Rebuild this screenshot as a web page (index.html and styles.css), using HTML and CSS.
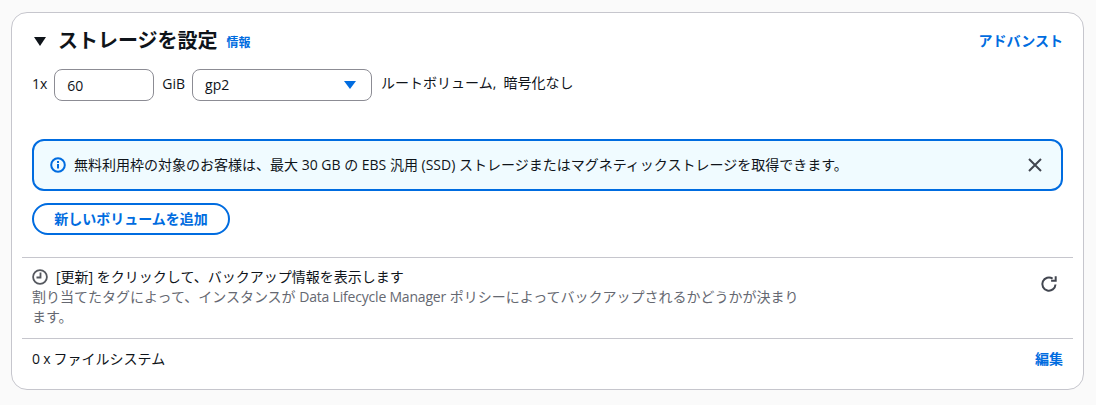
FILE: index.html
```html
<!DOCTYPE html>
<html lang="ja">
<head>
<meta charset="utf-8">
<title>ストレージを設定</title>
<link rel="stylesheet" href="styles.css">
</head>
<body>
<section class="card">
  <header class="head">
    <div class="head-left">
      <svg class="caret" width="12" height="9" viewBox="0 0 12 9"><path d="M0 0h12L6 9z" fill="#0f141a"/></svg>
      <h2 class="title">ストレージを設定</h2>
      <a class="info">情報</a>
    </div>
    <a class="link-bold">アドバンスト</a>
  </header>
  <div class="row">
    <span class="lbl">1x</span>
    <div class="field field-num">60</div>
    <span class="lbl">GiB</span>
    <div class="field field-sel"><span>gp2</span>
      <svg width="12" height="8" viewBox="0 0 12 8"><path d="M0 0h12L6 8z" fill="#006ce0"/></svg>
    </div>
    <span class="lbl hint">ルートボリューム,&nbsp; 暗号化なし</span>
  </div>
  <div class="alert">
    <svg class="alert-icon" width="16" height="16" viewBox="0 0 16 16" fill="none" stroke="#006ce0" stroke-width="2"><circle cx="8" cy="8" r="6.8"/><path d="M8 7v4.5"/><path d="M8 4v2"/></svg>
    <span class="alert-text">無料利用枠の対象のお客様は、最大 30 GB の EBS 汎用 (SSD) ストレージまたはマグネティックストレージを取得できます。</span>
    <svg class="alert-close" width="16" height="16" viewBox="0 0 16 16" fill="none" stroke="#424650" stroke-width="2"><path d="M2 2l12 12M14 2L2 14"/></svg>
  </div>
  <button class="btn">新しいボリュームを追加</button>
  <div class="backup">
    <div class="backup-main">
      <div class="backup-title">
        <svg width="16" height="16" viewBox="0 0 16 16" fill="none" stroke="#55585f" stroke-width="1.8"><circle cx="8" cy="8" r="6.9"/><path d="M8.5 3.5V8.5H4.5"/></svg>
        <span>[更新] をクリックして、バックアップ情報を表示します</span>
      </div>
      <p class="backup-desc">割り当てたタグによって、インスタンスが <span class="tight">Data Lifecycle Manager</span> ポリシーによってバックアップされるかどうかが決まります。</p>
    </div>
    <svg class="refresh" width="18" height="18" viewBox="0 0 18 18" fill="none" stroke="#424650" stroke-width="2"><path d="M15.5 9.5A6.6 6.6 0 1 1 12.6 3.6"/><path d="M15.7 1.2v4.6h-4.6" /></svg>
  </div>
  <div class="fs">
    <span class="fs-label">0 x ファイルシステム</span>
    <a class="link-bold">編集</a>
  </div>
</section>
</body>
</html>
```
FILE: styles.css
```css
* { box-sizing: border-box; }
html, body { margin: 0; height: 405px; overflow: hidden; }
body {
  background: #fafafa;
  padding: 12px 12px 15px 11px;
  font-family: "Open Sans", "Noto Sans CJK JP", sans-serif;
  font-size: 14px;
  line-height: 20px;
  color: #0f141a;
}
.card {
  height: 378px;
  background: #fff;
  border: 1px solid #c6c6cd;
  border-radius: 16px;
  padding: 0 10px;
}
.head {
  display: flex;
  justify-content: space-between;
  align-items: center;
  padding: 2px 10px 0;
  height: 54px;
}
.head-left { display: flex; align-items: center; }
.caret { margin: 0 12px 0 2px; }
.title { margin: 0; font-size: 20px; line-height: 26px; font-weight: 700; }
.info { margin-left: 9px; font-size: 12px; font-weight: 700; color: #006ce0; padding-top: 4px; }
.link-bold { font-weight: 700; color: #006ce0; font-size: 14px; }
.row { display: flex; align-items: flex-start; padding: 2px 10px 0; }
.lbl { line-height: 30px; }
.field {
  height: 32px;
  border: 1px solid #8c8c94;
  border-radius: 8px;
  padding: 0 12px;
  line-height: 32px;
}
.field-num { width: 100px; margin: 0 8px 0 7px; }
.field-sel {
  width: 180px;
  margin: 0 9px 0 7px;
  display: flex;
  align-items: center;
  justify-content: space-between;
  padding-right: 15px;
}
.hint { line-height: 28px; }
.alert {
  margin: 38px 10px 0;
  height: 52px;
  background: #f0fbff;
  border: 2px solid #006ce0;
  border-radius: 12px;
  display: flex;
  align-items: center;
  padding: 0 18px 0 16px;
}
.alert-icon { flex: none; margin-right: 8px; }
.alert-text { flex: 1; font-size: 14px; }
.btn {
  display: block;
  margin: 12px 10px 0;
  width: 198px;
  height: 32px;
  background: #fff;
  border: 2px solid #006ce0;
  border-radius: 16px;
  color: #006ce0;
  font: 700 14px/20px "Open Sans", "Noto Sans CJK JP", sans-serif;
  padding: 0;
}
.backup {
  margin-top: 22px;
  border-top: 1px solid #c6c6cd;
  height: 81px;
  padding: 9px 15px 0 10px;
  display: flex;
  justify-content: space-between;
}
.backup-main { width: 775px; }
.backup-title { display: flex; align-items: center; gap: 8px; }
.backup-desc { margin: 0; color: #656871; line-height: 20px; }
.tight { letter-spacing: -0.2px; }
.refresh { margin-top: 8px; }
.fs {
  border-top: 1px solid #c6c6cd;
  padding: 10px 10px 0;
  display: flex;
  justify-content: space-between;
}
.fs-label { word-spacing: -0.5px; }
```
